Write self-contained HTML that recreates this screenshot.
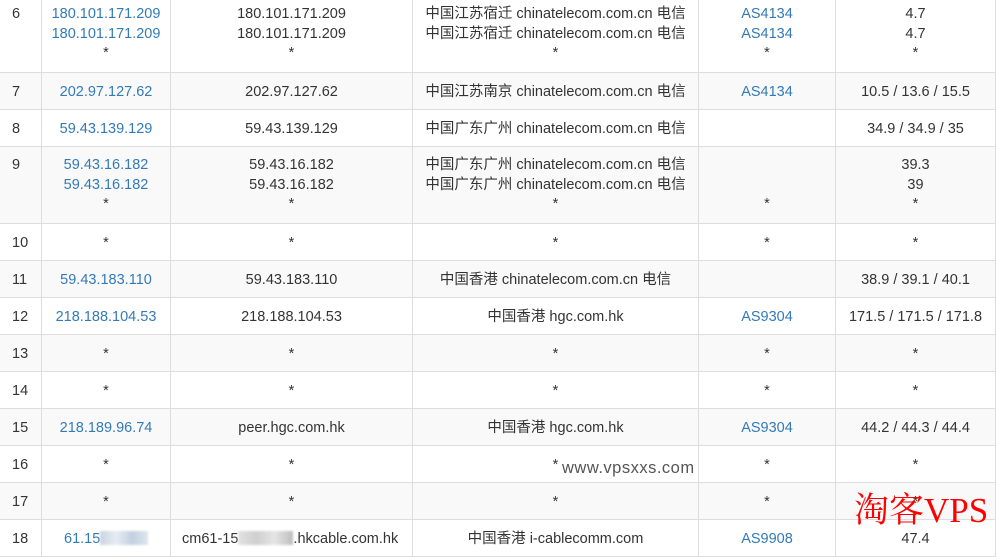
<!DOCTYPE html>
<html><head><meta charset="utf-8"><style>
body{margin:0;width:997px;height:545px;overflow:hidden;background:#fff;position:relative;font-family:"Liberation Sans","Noto Sans CJK SC",sans-serif;font-size:14.5px;color:#333}
table{position:absolute;left:-1px;top:-5px;border-collapse:collapse;table-layout:fixed}
td{border:1px solid #ddd;text-align:center;vertical-align:middle;line-height:19.5px;padding:3px 2px 0;height:33px;white-space:nowrap;overflow:hidden}
tr.m td{vertical-align:top;padding-top:9px;height:67px}
td:first-child{text-align:left;padding-left:12px}
tr.g td{background:#f9f9f9}
.b{color:#337ab7}
.blur{display:inline-block;height:14px;vertical-align:-2px;background:linear-gradient(90deg,#c9d4e2,#e6ecf2,#c3d0e0,#dde5ee);filter:blur(1px)}
.blur2{background:linear-gradient(90deg,#e2e2e2,#cfcfcf,#e5e5e5,#bdbdbd)}
.wm{position:absolute;left:562px;top:459px;font-size:16.5px;color:#555;letter-spacing:.5px}
.tk{position:absolute;left:854px;top:490px;font-family:"Liberation Serif","Noto Serif CJK SC",serif;font-size:35px;color:#f00;line-height:42px}
</style></head><body>
<table>
<colgroup><col style="width:42px"><col style="width:129px"><col style="width:242px"><col style="width:286px"><col style="width:137px"><col style="width:160px"></colgroup>
<tr class="m"><td>6</td><td class="b">180.101.171.209<br>180.101.171.209<br><span style="color:#333">*</span></td><td>180.101.171.209<br>180.101.171.209<br>*</td><td>中国江苏宿迁 chinatelecom.com.cn 电信<br>中国江苏宿迁 chinatelecom.com.cn 电信<br>*</td><td class="b">AS4134<br>AS4134<br><span style="color:#333">*</span></td><td>4.7<br>4.7<br>*</td></tr>
<tr class="g"><td>7</td><td class="b">202.97.127.62</td><td>202.97.127.62</td><td>中国江苏南京 chinatelecom.com.cn 电信</td><td class="b">AS4134</td><td>10.5 / 13.6 / 15.5</td></tr>
<tr><td>8</td><td class="b">59.43.139.129</td><td>59.43.139.129</td><td>中国广东广州 chinatelecom.com.cn 电信</td><td></td><td>34.9 / 34.9 / 35</td></tr>
<tr class="m g"><td>9</td><td class="b">59.43.16.182<br>59.43.16.182<br><span style="color:#333">*</span></td><td>59.43.16.182<br>59.43.16.182<br>*</td><td>中国广东广州 chinatelecom.com.cn 电信<br>中国广东广州 chinatelecom.com.cn 电信<br>*</td><td><br><br>*</td><td>39.3<br>39<br>*</td></tr>
<tr><td>10</td><td>*</td><td>*</td><td>*</td><td>*</td><td>*</td></tr>
<tr class="g"><td>11</td><td class="b">59.43.183.110</td><td>59.43.183.110</td><td>中国香港 chinatelecom.com.cn 电信</td><td></td><td>38.9 / 39.1 / 40.1</td></tr>
<tr><td>12</td><td class="b">218.188.104.53</td><td>218.188.104.53</td><td>中国香港 hgc.com.hk</td><td class="b">AS9304</td><td>171.5 / 171.5 / 171.8</td></tr>
<tr class="g"><td>13</td><td>*</td><td>*</td><td>*</td><td>*</td><td>*</td></tr>
<tr><td>14</td><td>*</td><td>*</td><td>*</td><td>*</td><td>*</td></tr>
<tr class="g"><td>15</td><td class="b">218.189.96.74</td><td>peer.hgc.com.hk</td><td>中国香港 hgc.com.hk</td><td class="b">AS9304</td><td>44.2 / 44.3 / 44.4</td></tr>
<tr><td>16</td><td>*</td><td>*</td><td>*</td><td>*</td><td>*</td></tr>
<tr class="g"><td>17</td><td>*</td><td>*</td><td>*</td><td>*</td><td>*</td></tr>
<tr><td>18</td><td class="b" style="text-align:left;padding-left:22px">61.15<span class="blur" style="width:48px"></span></td><td style="text-align:left;padding-left:11px">cm61-15<span class="blur blur2" style="width:55px"></span>.hkcable.com.hk</td><td>中国香港 i-cablecomm.com</td><td class="b">AS9908</td><td>47.4</td></tr>
</table>
<div class="wm">www.vpsxxs.com</div>
<div class="tk">淘客VPS</div>
</body></html>
